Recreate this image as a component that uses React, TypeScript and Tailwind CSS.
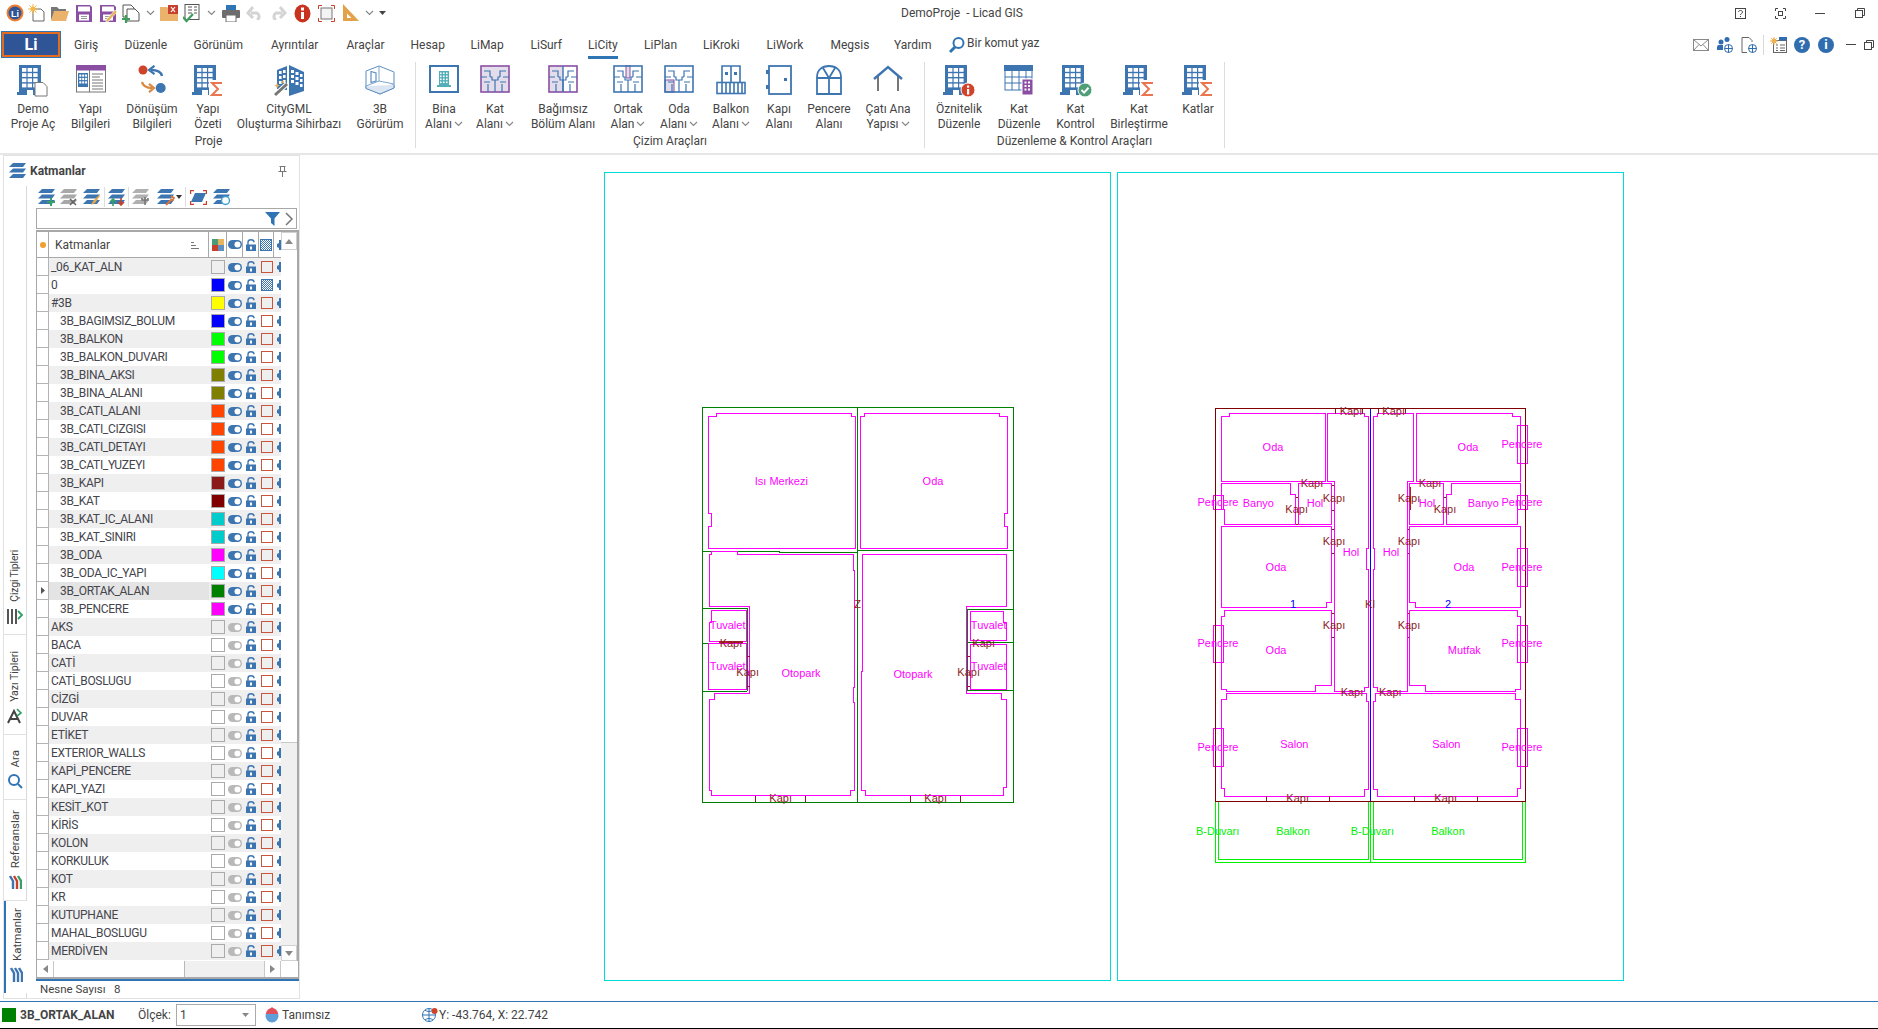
import React from 'react';

const BLUE = '#3d75b1';
const PURPLE = '#8a4fa3';
const LILAC = '#e3dcea';
const ORANGE = '#e9764f';

const Building: React.FC<{ overlay?: 'doc' | 'sigma' | 'info' | 'check' }> = ({ overlay }) => (
  <svg width="32" height="32" viewBox="0 0 32 32">
    <rect x="2" y="0" width="22" height="30" fill={BLUE} />
    <rect x="0" y="27" width="18" height="3" fill={BLUE} />
    {[0, 1, 2, 3].map((r) =>
      [0, 1, 2].map((c) => <rect key={`${r}${c}`} x={5 + c * 5.6} y={3 + r * 5.2} width="4.4" height="3.8" fill="#fff" />),
    )}
    <rect x="10" y="25" width="6" height="5" fill="#fff" />
    {overlay === 'doc' && <path d="M18 17.5h8l4 4v9.5H18z" fill="#fff" stroke="#777" strokeWidth="1" />}
    {overlay === 'sigma' && (
      <>
        <rect x="17" y="15" width="15" height="17" fill="#fff" />
        <path d="M30 18H20l6 6-6 6h10" fill="none" stroke={ORANGE} strokeWidth="2" />
      </>
    )}
    {overlay === 'info' && (
      <>
        <circle cx="25" cy="25" r="7" fill="#d0432b" stroke="#fff" />
        <rect x="24" y="24" width="2.2" height="5.5" fill="#fff" />
        <rect x="24" y="20.5" width="2.2" height="2.2" fill="#fff" />
      </>
    )}
    {overlay === 'check' && (
      <>
        <circle cx="25" cy="25" r="7" fill="#4f9e78" stroke="#fff" />
        <path d="M21.5 25l2.6 2.6 4.4-4.8" fill="none" stroke="#fff" strokeWidth="2" />
      </>
    )}
  </svg>
);

const YapiBilgi = () => (
  <svg width="30" height="28" viewBox="0 0 30 28">
    <rect x=".5" y="1" width="29" height="26" fill="#fff" stroke="#777" />
    <rect x="0" y="0" width="30" height="5.5" fill={PURPLE} />
    <path d="M13.5 5v22" stroke="#777" />
    <rect x="2" y="8" width="10" height="14" fill={BLUE} />
    {[0, 1, 2].map((r) => [0, 1, 2].map((c) => <rect key={`${r}${c}`} x={3.3 + c * 2.9} y={9.5 + r * 3.4} width="2" height="2.2" fill="#fff" />))}
    <path d="M16 9h11M16 12h8M16 15h11M16 18h11M16 21h11M16 24h11" stroke="#777" strokeWidth="1" />
  </svg>
);

const Donusum = () => (
  <svg width="28" height="28" viewBox="0 0 28 28">
    <circle cx="5" cy="5" r="4.5" fill="#d0432b" />
    <circle cx="22.7" cy="23" r="5" fill={BLUE} />
    <path d="M24 11C23 6 19 5 13 5" fill="none" stroke={BLUE} strokeWidth="2.4" />
    <path d="M16.5 0.8L11 5l5.5 4.2" fill="none" stroke={BLUE} strokeWidth="2.2" />
    <path d="M4 17c1 4 4 6 10 6" fill="none" stroke="#d98b44" strokeWidth="2.4" />
    <path d="M11 18.8L16 23l-5 4.2" fill="none" stroke="#d98b44" strokeWidth="2.2" />
  </svg>
);

const CityGml = () => (
  <svg width="32" height="32" viewBox="0 0 32 32">
    <path d="M4 5l10-4v24l-10-1z" fill={BLUE} />
    <path d="M16 0l15 7v19l-15 5z" fill={BLUE} />
    {[0, 1, 2].map((r) => (
      <g key={r} fill="#fff">
        <rect x="6" y={6 + r * 5} width="2.6" height="3" />
        <rect x="10" y={5 + r * 5} width="2.6" height="3" />
        <rect x="18" y={5 + r * 5} width="3" height="3" />
        <rect x="22.5" y={7 + r * 5} width="3" height="3" />
        <rect x="27" y={9 + r * 5} width="2.5" height="3" />
      </g>
    ))}
    <path d="M2 30L14 19" stroke="#fff" strokeWidth="5" />
    <path d="M2 30L14 19" stroke="#777" strokeWidth="3" />
    <path d="M4 18l1 2 2 .6-2 .8-1 2-.8-2-2-.8 2-.6zM10 15l.7 1.5 1.5.5-1.5.6-.7 1.4-.6-1.4-1.4-.6 1.4-.5z" fill="#e6b45a" />
  </svg>
);

const Gorurum = () => (
  <svg width="30" height="30" viewBox="0 0 30 30" fill="none" stroke="#5f90c3" strokeWidth="1">
    <path d="M1 6L14 1l15 6v16l-14 6L1 23z" />
    <path d="M1 6v15l14 4 14-6V7" stroke="#a8c2de" />
    <path d="M14 1v15M1 21l13-5 15 3" stroke="#7ea6d0" />
    <path d="M6 6.5v11l5-1.5V8z" strokeWidth="1.2" />
    <path d="M1 23l14 4.5L29 22" strokeWidth="1.4" />
    <path d="M1 21v2.5l14 5.5 14-6v-3" fill="#dbe6f2" />
  </svg>
);

const BinaAlan = () => (
  <svg width="30" height="28" viewBox="0 0 30 28">
    <rect x="1" y="1" width="28" height="26" fill="#fff" stroke={BLUE} strokeWidth="2" />
    <rect x="10" y="6" width="10" height="15" fill="#52afb9" />
    <rect x="8" y="20" width="14" height="2" fill="#52afb9" />
    {[0, 1, 2, 3].map((r) => [0, 1, 2].map((c) => <rect key={`${r}${c}`} x={11 + c * 3} y={7.5 + r * 3} width="1.6" height="1.6" fill="#fff" />))}
  </svg>
);

const Plan: React.FC<{ mode: 'kat' | 'bag' | 'ortak' | 'oda' }> = ({ mode }) => {
  const frame = mode === 'kat' || mode === 'bag' ? PURPLE : BLUE;
  return (
    <svg width="30" height="28" viewBox="0 0 30 28">
      {mode === 'kat' && <rect x="1" y="1" width="28" height="26" fill={LILAC} />}
      {mode === 'bag' && <rect x="1" y="1" width="14" height="26" fill={LILAC} />}
      {mode === 'ortak' && <path d="M13 0h4v13h-4z" fill={LILAC} stroke={PURPLE} />}
      {mode === 'oda' && <rect x="1" y="15" width="9" height="12" fill={LILAC} stroke={PURPLE} />}
      <rect x="1" y="1" width="28" height="26" fill="none" stroke={frame} strokeWidth="1.6" />
      <path
        d="M1 12h6M10 12V6H4M20 12V6h6M23 12h6M10 12h2v3h6v-3h2M15 15v12M8 27v-8M22 27v-8M4 17h6M20 17h6"
        fill="none"
        stroke={BLUE}
        strokeWidth="1.2"
      />
      {mode === 'bag' && <path d="M15 1v26" stroke={BLUE} strokeWidth="1.4" />}
    </svg>
  );
};

const Balkon = () => (
  <svg width="30" height="30" viewBox="0 0 30 30" fill="none" stroke={BLUE} strokeWidth="1.6">
    <path d="M6 18V1h18v17M15 1v17" />
    <rect x="9" y="7" width="3" height="3" fill={BLUE} stroke="none" />
    <rect x="18" y="7" width="3" height="3" fill={BLUE} stroke="none" />
    <rect x="1" y="17.5" width="28" height="11" />
    <path d="M6 18v10M10 18v10M14 18v10M18 18v10M22 18v10M26 18v10" />
  </svg>
);

const Kapi = () => (
  <svg width="26" height="30" viewBox="0 0 26 30">
    <rect x="3" y="1" width="22" height="28" fill="#fff" stroke={BLUE} strokeWidth="1.8" />
    <rect x="18" y="13" width="3" height="3" fill={BLUE} />
    <rect x="0" y="5" width="3" height="4" fill={BLUE} />
    <rect x="0" y="20" width="3" height="4" fill={BLUE} />
  </svg>
);

const Pencere = () => (
  <svg width="26" height="30" viewBox="0 0 26 30" fill="none" stroke={BLUE} strokeWidth="1.8">
    <path d="M1 29V12C1 5 6 1 13 1s12 4 12 11v17z" />
    <path d="M1 13h24M13 13v16M13 13L7 3M13 13l6-10" />
  </svg>
);

const Cati = () => (
  <svg width="30" height="28" viewBox="0 0 30 28">
    <path d="M5 11v15M25 11v15" stroke="#777" strokeWidth="2" />
    <path d="M1 14L15 2l14 12" fill="none" stroke={BLUE} strokeWidth="2.4" />
  </svg>
);

const KatDuzenle = () => (
  <svg width="30" height="30" viewBox="0 0 30 30">
    <rect x="1" y="1" width="27" height="24" fill="#fff" stroke={BLUE} strokeWidth="1" />
    <rect x="0" y="0" width="29" height="6" fill={BLUE} />
    <path d="M1 12h27M1 18h27M8 6v19M15 6v19M22 6v19" stroke={BLUE} />
    <rect x="18" y="14" width="11" height="16" fill={PURPLE} stroke="#fff" />
    {[0, 1, 2].map((r) => [0, 1].map((c) => <rect key={`${r}${c}`} x={20.5 + c * 3.5} y={16.5 + r * 3.5} width="2" height="2" fill="#fff" />))}
  </svg>
);

const RIBBON: { title: string; items: { w: number; lines: string[]; caret?: boolean; icon: React.ReactNode }[] }[] = [
  {
    title: 'Proje',
    items: [
      { w: 58, lines: ['Demo', 'Proje Aç'], icon: <Building overlay="doc" /> },
      { w: 57, lines: ['Yapı', 'Bilgileri'], icon: <YapiBilgi /> },
      { w: 66, lines: ['Dönüşüm', 'Bilgileri'], icon: <Donusum /> },
      { w: 46, lines: ['Yapı', 'Özeti'], icon: <Building overlay="sigma" /> },
      { w: 116, lines: ['CityGML', 'Oluşturma Sihirbazı'], icon: <CityGml /> },
      { w: 66, lines: ['3B', 'Görürüm'], icon: <Gorurum /> },
    ],
  },
  {
    title: 'Çizim Araçları',
    items: [
      { w: 52, lines: ['Bina', 'Alanı'], caret: true, icon: <BinaAlan /> },
      { w: 50, lines: ['Kat', 'Alanı'], caret: true, icon: <Plan mode="kat" /> },
      { w: 86, lines: ['Bağımsız', 'Bölüm Alanı'], icon: <Plan mode="bag" /> },
      { w: 44, lines: ['Ortak', 'Alan'], caret: true, icon: <Plan mode="ortak" /> },
      { w: 58, lines: ['Oda', 'Alanı'], caret: true, icon: <Plan mode="oda" /> },
      { w: 46, lines: ['Balkon', 'Alanı'], caret: true, icon: <Balkon /> },
      { w: 50, lines: ['Kapı', 'Alanı'], icon: <Kapi /> },
      { w: 50, lines: ['Pencere', 'Alanı'], icon: <Pencere /> },
      { w: 68, lines: ['Çatı Ana', 'Yapısı'], caret: true, icon: <Cati /> },
    ],
  },
  {
    title: 'Düzenleme & Kontrol Araçları',
    items: [
      { w: 64, lines: ['Öznitelik', 'Düzenle'], icon: <Building overlay="info" /> },
      { w: 56, lines: ['Kat', 'Düzenle'], icon: <KatDuzenle /> },
      { w: 57, lines: ['Kat', 'Kontrol'], icon: <Building overlay="check" /> },
      { w: 70, lines: ['Kat', 'Birleştirme'], icon: <Building overlay="sigma" /> },
      { w: 48, lines: ['Katlar'], icon: <Building overlay="sigma" /> },
    ],
  },
];

const TABS: [string, number][] = [
  ['Giriş', 50.5],
  ['Düzenle', 69],
  ['Görünüm', 77.5],
  ['Ayrıntılar', 75.5],
  ['Araçlar', 64],
  ['Hesap', 60],
  ['LiMap', 60],
  ['LiSurf', 57.5],
  ['LiCity', 56],
  ['LiPlan', 59],
  ['LiKroki', 63.5],
  ['LiWork', 64],
  ['Megsis', 63.5],
  ['Yardım', 54],
];

const Chevron = () => (
  <svg width="9" height="6" viewBox="0 0 9 6" fill="none" stroke="#888" strokeWidth="1.2">
    <path d="M1 1l3.5 3.5L8 1" />
  </svg>
);

const Floppy: React.FC<{ pen?: boolean }> = ({ pen }) => (
  <svg width="17" height="17" viewBox="0 0 17 17">
    <path d="M0 0h14l2 2v15H0z" fill={PURPLE} />
    <rect x="2" y="1.500" width="12" height="5" fill="#fff" />
    <rect x="3" y="9.500" width="10" height="6" fill="#fff" />
    <path d="M5 11.500h6M5 13.500h6" stroke="#999" />
    {pen && <path d="M6 15l9-10 2 2-9 10H6z" fill="#e6b45a" stroke="#fff" strokeWidth=".6" />}
  </svg>
);

const QA: [number, React.ReactNode][] = [
  [
    22,
    <svg width="18" height="18" viewBox="0 0 18 18">
      <circle cx="9" cy="9" r="8.5" fill="#ed7d31" />
      <circle cx="9" cy="9" r="6.5" fill="#2f5597" />
      <text x="9" y="12.5" textAnchor="middle" fontSize="9" fontWeight="700" fill="#fff" fontFamily="Liberation Sans">
        Li
      </text>
    </svg>,
  ],
  [
    22,
    <svg width="18" height="18" viewBox="0 0 18 18">
      <path d="M5 5h8l3 3v9H5z" fill="#fff" stroke="#666" />
      <circle cx="5" cy="5" r="2.5" fill="#f2b84b" />
      <path d="M5 0v10M0 5h10M1.5 1.5l7 7M8.5 1.5l-7 7" stroke="#f2b84b" />
    </svg>,
  ],
  [
    24,
    <svg width="18" height="16" viewBox="0 0 18 16">
      <path d="M0 2h6l2 2h7v3H4L0 15z" fill="#777" />
      <path d="M3 6h15l-3 10H0z" fill="#eab26b" />
    </svg>,
  ],
  [24, <Floppy />],
  [24, <Floppy pen />],
  [
    22,
    <svg width="18" height="19" viewBox="0 0 18 19">
      <path d="M1 1h8l3 3v9H1z" fill="#fff" stroke="#555" />
      <path d="M5 5h8l4 4v8H5z" fill="#fff" stroke="#555" />
      <path d="M0 15h8M4 11v8" stroke="#3f9e5e" strokeWidth="2.2" />
    </svg>,
  ],
  [16, <Chevron />],
  [
    22,
    <svg width="18" height="16" viewBox="0 0 18 16">
      <path d="M0 2h7l2 2h9v12H0z" fill="#eab26b" />
      <rect x="8" y="0" width="10" height="9" fill="#c8402b" />
      <path d="M11 2l4 5M15 2l-4 5" stroke="#fff" strokeWidth="1.2" />
    </svg>,
  ],
  [
    23,
    <svg width="18" height="19" viewBox="0 0 18 19">
      <rect x="2" y="0.5" width="14" height="15" fill="#fff" stroke="#555" />
      <path d="M5 3h4M11 3h3M5 6h4M11 6h3M5 9h4M11 9h3" stroke="#555" />
      <path d="M0 13l3.5 4L10 10" fill="none" stroke="#3f9e5e" strokeWidth="2.2" />
    </svg>,
  ],
  [16, <Chevron />],
  [
    23,
    <svg width="18" height="17" viewBox="0 0 18 17">
      <rect x="4" y="0" width="10" height="6" fill="#2f75b5" />
      <rect x="0" y="5" width="18" height="8" rx="1" fill="#6d6d6d" />
      <rect x="4" y="10" width="10" height="7" fill="#fff" stroke="#6d6d6d" />
    </svg>,
  ],
  [
    24,
    <svg width="17" height="14" viewBox="0 0 17 14" fill="none" stroke="#d4d4d4" strokeWidth="3">
      <path d="M5 7h6a4 4 0 0 1 0 7M7 1L2 7l5 5" />
    </svg>,
  ],
  [
    24,
    <svg width="17" height="14" viewBox="0 0 17 14" fill="none" stroke="#d4d4d4" strokeWidth="3">
      <path d="M12 7H6a4 4 0 0 0 0 7M10 1l5 6-5 5" />
    </svg>,
  ],
  [
    24,
    <svg width="17" height="19" viewBox="0 0 17 19">
      <ellipse cx="8.5" cy="9.5" rx="8" ry="9" fill="#c8321e" />
      <rect x="7" y="8" width="3" height="7" fill="#fff" />
      <rect x="7" y="3.5" width="3" height="3" fill="#fff" />
    </svg>,
  ],
  [
    24,
    <svg width="17" height="17" viewBox="0 0 17 17" fill="none">
      <path d="M0.5 4V0.5H4M13 .5h3.5V4M16.5 13v3.5H13M4 16.5H.5V13" stroke="#c8402b" />
      <rect x="3" y="3" width="11" height="11" fill="#f3f3f3" stroke="#777" />
    </svg>,
  ],
  [
    24,
    <svg width="17" height="18" viewBox="0 0 17 18">
      <path d="M1 0l16 17H1z" fill="#e2a24b" />
      <path d="M5 9.5L9.5 14H5z" fill="#fff" />
    </svg>,
  ],
  [14, <Chevron />],
  [
    12,
    <svg width="7" height="4" viewBox="0 0 7 4">
      <path d="M0 0h7L3.5 4z" fill="#444" />
    </svg>,
  ],
];

const Stack: React.FC<{ color?: string; children?: React.ReactNode }> = ({ color = BLUE, children }) => (
  <svg width="18" height="17" viewBox="0 0 18 17">
    <path d="M4 0h13l-3 4H0zM4 5.5h13l-3 4H0zM4 11h13l-3 4H0z" fill={color} />
    {children}
  </svg>
);

const TOOLS: { w: number; sep?: boolean; icon: React.ReactNode }[] = [
  {
    w: 22,
    icon: (
      <Stack>
        <path d="M13 9v8M9 13h8" stroke="#3a9e6a" strokeWidth="2" />
      </Stack>
    ),
  },
  {
    w: 22,
    icon: (
      <Stack color="#a8a8a8">
        <path d="M10 10l6 6M16 10l-6 6" stroke="#666" strokeWidth="1.6" />
      </Stack>
    ),
  },
  {
    w: 25,
    sep: true,
    icon: (
      <Stack>
        <path d="M10 12l6-6 1 1-5 7z M10 12l-2 4 4-2z" fill="#e6a74e" />
      </Stack>
    ),
  },
  {
    w: 24,
    sep: true,
    icon: (
      <Stack>
        <path d="M5 17V11M2 13l3-3 3 3" stroke="#3a9e6a" strokeWidth="1.6" fill="none" />
        <path d="M13 9v6M10 13l3 3 3-3" stroke="#c8402b" strokeWidth="1.6" fill="none" />
      </Stack>
    ),
  },
  {
    w: 24,
    icon: (
      <Stack color="#b0b0b0">
        <path d="M13 8v8M10 9v2h6V9" stroke="#777" strokeWidth="1.6" fill="none" />
      </Stack>
    ),
  },
  {
    w: 33,
    sep: true,
    icon: (
      <span className="flex items-center gap-[1px]">
        <Stack>
          <path d="M9 16l6-6M14 7l3 2-2 3" stroke="#d9743a" strokeWidth="1.8" fill="none" />
        </Stack>
        <svg width="6" height="4" viewBox="0 0 6 4">
          <path d="M0 0h6L3 4z" fill="#333" />
        </svg>
      </span>
    ),
  },
  {
    w: 24,
    icon: (
      <svg width="17" height="15" viewBox="0 0 17 15" fill="none">
        <path d="M5 3h11l-4 9H1z" fill={BLUE} />
        <path d="M.5 4V.5H4M13 .5h3.5V4M16.5 11v3.5H13M4 14.5H.5V11" stroke="#c8402b" strokeWidth="1.4" />
      </svg>
    ),
  },
  {
    w: 23,
    icon: (
      <Stack>
        <circle cx="12.5" cy="11.5" r="4" fill="#fff" stroke="#3d9fd0" strokeWidth="1.4" />
      </Stack>
    ),
  },
];

type Layer = { name: string; color?: string; child?: boolean; on?: boolean; pattern?: boolean; active?: boolean };

const LAYERS: Layer[] = [
  { name: '_06_KAT_ALN', on: true },
  { name: '0', color: '#0000ff', on: true, pattern: true },
  { name: '#3B', color: '#ffff00', on: true },
  { name: '3B_BAGIMSIZ_BOLUM', color: '#0000ff', child: true, on: true },
  { name: '3B_BALKON', color: '#00ff00', child: true, on: true },
  { name: '3B_BALKON_DUVARI', color: '#00ff00', child: true, on: true },
  { name: '3B_BINA_AKSI', color: '#808000', child: true, on: true },
  { name: '3B_BINA_ALANI', color: '#808000', child: true, on: true },
  { name: '3B_CATI_ALANI', color: '#ff4500', child: true, on: true },
  { name: '3B_CATI_CIZGISI', color: '#ff4500', child: true, on: true },
  { name: '3B_CATI_DETAYI', color: '#ff4500', child: true, on: true },
  { name: '3B_CATI_YUZEYI', color: '#ff4500', child: true, on: true },
  { name: '3B_KAPI', color: '#8b1a1a', child: true, on: true },
  { name: '3B_KAT', color: '#800000', child: true, on: true },
  { name: '3B_KAT_IC_ALANI', color: '#00cccc', child: true, on: true },
  { name: '3B_KAT_SINIRI', color: '#00cccc', child: true, on: true },
  { name: '3B_ODA', color: '#ff00ff', child: true, on: true },
  { name: '3B_ODA_IC_YAPI', color: '#00ffff', child: true, on: true },
  { name: '3B_ORTAK_ALAN', color: '#008000', child: true, on: true, active: true },
  { name: '3B_PENCERE', color: '#ff00ff', child: true, on: true },
  ...[
    'AKS',
    'BACA',
    'CATİ',
    'CATİ_BOSLUGU',
    'CİZGİ',
    'DUVAR',
    'ETİKET',
    'EXTERIOR_WALLS',
    'KAPİ_PENCERE',
    'KAPI_YAZI',
    'KESİT_KOT',
    'KİRİS',
    'KOLON',
    'KORKULUK',
    'KOT',
    'KR',
    'KUTUPHANE',
    'MAHAL_BOSLUGU',
    'MERDİVEN',
  ].map((name) => ({ name })),
];

const Toggle: React.FC<{ on?: boolean }> = ({ on }) => (
  <svg width="14" height="9" viewBox="0 0 14 9">
    <rect width="14" height="9" rx="4.5" fill={on ? BLUE : '#b9b9b9'} />
    <circle cx="9.5" cy="4.5" r="3" fill="#fff" />
  </svg>
);

const Lock = () => (
  <svg width="10" height="12" viewBox="0 0 10 12">
    <path d="M2 6V3.2C2 1.6 3.2.8 5 .8s3 .8 3 2.4" fill="none" stroke={BLUE} strokeWidth="1.4" />
    <rect x="0" y="5.5" width="10" height="6.5" fill={BLUE} />
    <rect x="4" y="7.5" width="2" height="3" fill="#fff" />
  </svg>
);

const Pattern: React.FC<{ fill?: boolean }> = ({ fill }) =>
  fill ? (
    <span className="h-[12px] w-[12px] border border-[#3d75b1] bg-[repeating-conic-gradient(#3d75b1_0_25%,#fff_0_50%)] bg-[length:2px_2px]" />
  ) : (
    <span className="h-[12px] w-[12px] border border-[#c8553c]" />
  );

const Plug = () => (
  <svg width="8" height="12" viewBox="0 0 8 12" className="shrink-0">
    <path d="M3 1h2v3h2v2H5v1h2v2H5v2H3V9L1 8V5l2-1z" fill={BLUE} />
  </svg>
);

const LayerRow: React.FC<{ layer: Layer; index: number }> = ({ layer, index }) => {
  const bg = index % 2 === 0 ? 'bg-[#efefef]' : 'bg-white';
  return (
    <div className={`flex h-[18px] items-center ${bg}`}>
      <div className="flex h-full w-[12px] shrink-0 items-center justify-center border-r border-b border-[#b4b4b4] bg-white">
        {layer.active && (
          <svg width="4" height="7" viewBox="0 0 4 7">
            <path d="M0 0l4 3.5L0 7z" fill="#555" />
          </svg>
        )}
      </div>
      <div
        className={`flex h-full w-[160px] shrink-0 items-center text-[12px] tracking-[-0.3px] text-[#45454d] ${layer.child ? 'pl-[11px]' : 'pl-[2px]'} ${layer.active ? 'bg-[#e4e4e4]' : ''}`}
      >
        {layer.name}
      </div>
      <div className="flex w-[18px] shrink-0 items-center justify-center">
        <span
          className="h-[14px] w-[14px] border border-[#aaaaaa]"
          style={layer.color ? { backgroundColor: layer.color } : undefined}
        />
      </div>
      <div className="flex w-[16px] shrink-0 items-center justify-center">
        <Toggle on={layer.on} />
      </div>
      <div className="flex w-[16px] shrink-0 items-center justify-center">
        <Lock />
      </div>
      <div className="flex w-[15px] shrink-0 items-center justify-center">
        <Pattern fill={layer.pattern} />
      </div>
      <div className="flex w-[7px] shrink-0 items-center overflow-hidden pl-[2px]">
        <Plug />
      </div>
    </div>
  );
};

const SIDE_TABS: { label: string; h: number; active?: boolean; text: string; icon: React.ReactNode }[] = [
  {
    label: 'Çizgi Tipleri',
    h: 95,
    text: 'text-[10.500px] tracking-[-0.2px]',
    icon: (
      <svg width="16" height="16" viewBox="0 0 16 16" fill="none">
        <path d="M1 1v15M5 1v15M9 1v15" stroke="#444" strokeWidth="1.8" />
        <path d="M11 3l4 4-4 4" stroke="#2f9e63" strokeWidth="1.8" />
      </svg>
    ),
  },
  {
    label: 'Yazı Tipleri',
    h: 100,
    text: 'text-[10.500px]',
    icon: (
      <svg width="16" height="16" viewBox="0 0 16 16" fill="none">
        <path d="M1 15L7 3l6 12M3.500 11h7" stroke="#444" strokeWidth="2" />
        <path d="M10 1l4 4-4 3" stroke="#2f9e63" strokeWidth="1.6" />
      </svg>
    ),
  },
  {
    label: 'Ara',
    h: 65,
    text: 'text-[11.500px]',
    icon: (
      <svg width="16" height="16" viewBox="0 0 16 16" fill="none" stroke="#2f75b5" strokeWidth="2">
        <circle cx="7" cy="7" r="5" />
        <path d="M11 11l4 4" />
      </svg>
    ),
  },
  {
    label: 'Referanslar',
    h: 101,
    text: 'text-[11.500px]',
    icon: (
      <svg width="13" height="16" viewBox="0 0 13 16" fill="none" strokeWidth="2.4">
        <path d="M1 2l3 5v8" stroke="#3d75b1" />
        <path d="M5 2l3 5v8" stroke="#c8402b" />
        <path d="M9 2l3 5v8" stroke="#3a9e6a" />
      </svg>
    ),
  },
  {
    label: 'Katmanlar',
    h: 92,
    active: true,
    text: 'text-[11.500px]',
    icon: (
      <svg width="13" height="16" viewBox="0 0 13 16" fill="none" stroke={BLUE} strokeWidth="2.4">
        <path d="M1 1l3 5v9M5 1l3 5v9M9 1l3 5v9" />
      </svg>
    ),
  },
];

// floor plan coordinates are 3x page pixels, offset from the plan origin
const GROUND_ROOMS = [
  '55,65 80,65 80,56 485,56 485,65 497,65 497,460 55,460 55,394 65,394 65,355 55,355',
  '511,65 523,65 523,56 928,56 928,65 953,65 953,355 943,355 943,394 953,394 953,460 511,460',
  '58,478 65,478 65,470 142,470 142,478 491,478 491,526 494,526 494,877 490,877 490,922 494,922 494,1187 482,1187 482,1201 64,1201 64,1187 58,1187 58,913 73,913 73,895 179,895 179,634 58,634',
  '517,478 950,478 950,634 829,634 829,895 935,895 935,913 950,913 950,1178 941,1178 941,1201 526,1201 526,1187 514,1187 514,831 517,831',
  '64,646 170,646 170,739 58,739 58,682 64,682',
  '55,745 170,745 170,884 55,884',
  '841,649 941,649 941,682 950,682 950,736 841,736',
  '841,748 950,748 950,884 841,884',
];

const FLOOR_ROOMS = [
  '94,65 119,65 119,56 407,56 407,259 94,259',
  '679,56 967,56 967,65 992,65 992,259 679,259',
  '413,56 524,56 524,65 536,65 536,461 529,461 529,523 536,523 536,879 525,879 525,889 433,889 433,259 413,259',
  '551,65 563,65 563,56 670,56 670,259 653,259 653,889 563,889 563,879 551,879 551,523 555,523 555,461 551,461',
  '94,265 302,265 302,298 317,298 317,388 103,388 103,344 94,344',
  '325,265 425,265 425,388 325,388',
  '784,265 992,265 992,344 982,344 982,388 769,388 769,298 784,298',
  '658,265 761,265 761,388 658,388',
  '94,394 425,394 425,623 409,623 409,637 94,637',
  '658,394 992,394 992,637 676,637 676,623 658,623',
  '103,646 425,646 425,871 377,871 377,889 109,889 109,884 94,884 94,664 103,664',
  '658,646 982,646 982,664 992,664 992,884 976,884 976,889 707,889 707,871 658,871',
  '109,895 530,895 530,919 536,919 536,1185 524,1185 524,1204 103,1204 103,1180 94,1180 94,914 109,914',
  '551,919 557,919 557,895 976,895 976,914 992,914 992,1180 982,1180 982,1204 563,1204 563,1185 551,1185',
  '70,301 101,301 101,344 70,344',
  '70,691 101,691 101,803 70,803',
  '70,1000 101,1000 101,1115 70,1115',
  '982,91 1013,91 1013,206 982,206',
  '982,301 1013,301 1013,344 982,344',
  '982,460 1013,460 1013,575 982,575',
  '982,691 1013,691 1013,803 982,803',
  '982,1000 1013,1000 1013,1115 982,1115',
];

const M = '#ff00ff';
const R = '#8a1c1c';
const G = '#00f000';

const GROUND_TEXT: [string, number, number, string][] = [
  ['Isı Merkezi', 274, 258, M],
  ['Oda', 729, 258, M],
  ['Z', 503, 628, R],
  ['Tuvalet', 113, 691, M],
  ['Tuvalet', 896, 691, M],
  ['Kapı', 123, 743, R],
  ['Kapı', 881, 743, R],
  ['Tuvalet', 113, 814, M],
  ['Tuvalet', 896, 814, M],
  ['Kapı', 173, 830, R],
  ['Kapı', 836, 830, R],
  ['Otopark', 333, 835, M],
  ['Otopark', 669, 838, M],
  ['Kapı', 272, 1210, R],
  ['Kapı', 737, 1210, R],
];

const FLOOR_TEXT: [string, number, number, string][] = [
  ['Kapı', 483, 47, R],
  ['Kapı', 611, 47, R],
  ['Oda', 249, 157, M],
  ['Oda', 834, 157, M],
  ['Pencere', 996, 148, M],
  ['Pencere', 84, 322, M],
  ['Banyo', 205, 325, M],
  ['Hol', 375, 325, M],
  ['Kapı', 320, 343, R],
  ['Kapı', 366, 263, R],
  ['Kapı', 432, 310, R],
  ['Kapı', 657, 310, R],
  ['Hol', 711, 325, M],
  ['Kapı', 765, 343, R],
  ['Kapı', 720, 263, R],
  ['Banyo', 880, 325, M],
  ['Pencere', 996, 322, M],
  ['Kapı', 432, 438, R],
  ['Kapı', 657, 438, R],
  ['Hol', 483, 472, M],
  ['Hol', 603, 472, M],
  ['Oda', 258, 516, M],
  ['Oda', 822, 516, M],
  ['Pencere', 996, 517, M],
  ['1', 309, 627, '#0000ff'],
  ['2', 774, 627, '#0000ff'],
  ['Kl', 540, 627, R],
  ['Kapı', 432, 690, R],
  ['Kapı', 657, 690, R],
  ['Pencere', 84, 745, M],
  ['Pencere', 996, 745, M],
  ['Oda', 258, 766, M],
  ['Mutfak', 823, 766, M],
  ['Kapı', 486, 890, R],
  ['Kapı', 601, 890, R],
  ['Salon', 313, 1048, M],
  ['Salon', 769, 1048, M],
  ['Pencere', 84, 1057, M],
  ['Pencere', 996, 1057, M],
  ['Kapı', 323, 1210, R],
  ['Kapı', 767, 1210, R],
  ['B-Duvarı', 83, 1309, G],
  ['Balkon', 309, 1309, G],
  ['B-Duvarı', 547, 1309, G],
  ['Balkon', 774, 1309, G],
];

const Line: React.FC<{ d: string; color: string; w?: number }> = ({ d, color, w = 1 }) => (
  <path d={d} fill="none" stroke={color} strokeWidth={w} vectorEffect="non-scaling-stroke" />
);

const Labels: React.FC<{ items: [string, number, number, string][] }> = ({ items }) => (
  <g fontFamily="Liberation Sans" fontSize="33" textAnchor="middle" dominantBaseline="middle" shapeRendering="auto">
    {items.map(([t, x, y, c], i) => (
      <text key={i} x={x} y={y + 3} fill={c}>
        {t}
      </text>
    ))}
  </g>
);

const Drawing = () => (
  <svg width="1578" height="846" viewBox="300 155 1578 846" shapeRendering="crispEdges" className="block">
    <rect x="604.5" y="172.5" width="506" height="808" fill="none" stroke="#00dcdc" strokeWidth="1.5" />
    <rect x="1117.5" y="172.5" width="506" height="808" fill="none" stroke="#00dcdc" strokeWidth="1.5" />

    <g transform="translate(690 395) scale(0.33333)">
      <Line
        color="#008000"
        d="M37 38H970V1222H37ZM502 38V1222M37 469H270V472H502M502 466H970M37 640H172M37 745H172M37 889H172M172 640V889M832 643H970M832 742H970M832 886H970M832 643V886"
      />
      {GROUND_ROOMS.map((p, i) => (
        <polygon key={i} points={p} fill="none" stroke={M} strokeWidth="1" vectorEffect="non-scaling-stroke" />
      ))}
      <Line color="#8a1c1c" d="M196 1202V1222M346 1202V1222M661 1202V1222M811 1202V1222M172 784H179M172 874H179M832 784H840M832 874H840" />
      <Line color="#a82424" w={2} d="M88 742H158" />
      <Labels items={GROUND_TEXT} />
    </g>

    <g transform="translate(1190 395) scale(0.33333)">
      <Line color="#00f000" d="M76 1219V1402H1006V1219M541 1219V1402M85 1219V1393H536V1219M550 1219V1393H997V1219" />
      {FLOOR_ROOMS.map((p, i) => (
        <polygon key={i} points={p} fill="none" stroke={M} strokeWidth="1" vectorEffect="non-scaling-stroke" />
      ))}
      <Line color="#800000" d="M76 41H1006V1219H76Z" />
      <Line
        color="#8a1c1c"
        d="M229 1204V1219M418 1204V1219M673 1204V1219M862 1204V1219M437 41V56M518 41V56M567 41V56M647 41V56M425 271H433M425 346H433M425 403H433M425 475H433M425 655H433M425 727H433M653 403H658M653 475H658M653 655H658M653 727H658M317 307H325M317 388H325M761 307H769"
      />
      <Line color="#a82424" d="M661 275V346" />
      <Line color="#0000ff" d="M541 41V1219" />
      <Labels items={FLOOR_TEXT} />
    </g>
  </svg>
);

export default function App() {
  return (
    <div className="flex h-[1029px] w-[1878px] flex-col overflow-hidden bg-white font-['Roboto',sans-serif] text-[12px] text-[#444444]">
      {/* title bar */}
      <div className="flex h-[31px] shrink-0 items-center pb-[5px] pl-[4px]">
        {QA.map(([w, icon], i) => (
          <span key={i} className="flex shrink-0 items-center justify-center" style={{ width: w }}>
            {icon}
          </span>
        ))}
        <span className="ml-[513px] whitespace-nowrap text-[12px]">DemoProje&nbsp; - Licad GIS</span>
        <div className="ml-auto mr-[-2px] flex items-center">
          <span className="flex w-[40px] justify-center">
            <svg width="11" height="11" viewBox="0 0 11 11" fill="none" stroke="#444">
              <rect x=".5" y=".5" width="10" height="10" />
              <path d="M3.500 4c0-2 4-2 4 0 0 1.500-2 1.500-2 3M5.500 8v1" />
            </svg>
          </span>
          <span className="flex w-[40px] justify-center">
            <svg width="11" height="11" viewBox="0 0 11 11" fill="none" stroke="#444">
              <path d="M.5 3V.5H3M8 .5h2.500V3M10.500 8v2.500H8M3 10.500H.5V8" />
              <rect x="3.500" y="3.500" width="4" height="4" />
            </svg>
          </span>
          <span className="flex w-[40px] justify-center">
            <span className="h-px w-[10px] bg-[#444]" />
          </span>
          <span className="flex w-[40px] justify-center">
            <svg width="10" height="10" viewBox="0 0 10 10" fill="none" stroke="#444">
              <rect x=".5" y="2.500" width="7" height="7" />
              <path d="M2.500 2.500v-2h7v7h-2" />
            </svg>
          </span>
        </div>
      </div>

      {/* tabs */}
      <div className="flex h-[27px] shrink-0 items-center pl-[1px]">
        <div className="mr-[13px] flex h-[27px] w-[60px] items-center justify-center border border-[#2f75b5]">
          <div className="flex h-full w-full items-center justify-center border-2 border-[#e36c1e] bg-[#2f5597] text-[16px] font-bold text-white">
            Li
          </div>
        </div>
        {TABS.map(([t, w]) => (
          <div key={t} className="flex h-full shrink-0 items-center" style={{ width: w }}>
            <span className={t === 'LiCity' ? 'border-b-[3px] border-[#2f75b5] pb-[2px] pt-[5px]' : ''}>{t}</span>
          </div>
        ))}
        <svg width="17" height="18" viewBox="0 0 17 18" fill="none" stroke="#2f75b5" strokeWidth="2" className="mr-[2px]">
          <circle cx="10.500" cy="7" r="5" />
          <path d="M7 11l-5 5" strokeWidth="3" />
        </svg>
        <span className="mb-[4px]">Bir komut yaz</span>
        <div className="ml-auto flex items-center">
          <span className="flex w-[24px] justify-center">
            <svg width="16" height="12" viewBox="0 0 16 12" fill="none" stroke="#888">
              <rect x=".5" y=".5" width="15" height="11" />
              <path d="M.5.5L8 7l7.500-6.500M.5 11.500L6 5.500M15.500 11.500L10 5.500" />
            </svg>
          </span>
          <span className="flex w-[24px] justify-center">
            <svg width="16" height="16" viewBox="0 0 16 16">
              <circle cx="10" cy="2.500" r="2.500" fill="#2f6db0" />
              <circle cx="4" cy="5" r="2.500" fill="#2f6db0" />
              <path d="M0 13V10q0-2 2-2h4v5z" fill="#2f6db0" />
              <circle cx="11.500" cy="11.500" r="4" fill="#fff" stroke="#2f6db0" />
              <path d="M7.500 11.500h8M11.500 7.500v8" stroke="#2f6db0" />
            </svg>
          </span>
          <span className="flex w-[24px] justify-center">
            <svg width="16" height="16" viewBox="0 0 16 16" fill="none" stroke="#666">
              <path d="M1 .5h7l3 3V5M6 15.500H1V.5" />
              <circle cx="11.500" cy="11.500" r="4" fill="#fff" stroke="#2f6db0" />
              <path d="M7.500 11.500h8M11.500 7.500v8" stroke="#2f6db0" />
            </svg>
          </span>
          <span className="mx-[2px] h-[20px] w-px bg-[#d8d8d8]" />
          <span className="flex w-[24px] justify-center">
            <svg width="17" height="16" viewBox="0 0 17 16">
              <rect x="3.500" y="3.500" width="13" height="12" fill="#fff" stroke="#666" />
              <rect x="9" y="0" width="8" height="3.500" fill="#2f6db0" />
              <path d="M6 8h2M10 8h5M6 11h2M10 11h5M6 13.500h2M10 13.500h5" stroke="#666" />
              <circle cx="4" cy="4" r="2.400" fill="#f0b050" />
              <path d="M4 0v8M0 4h8M1.200 1.200l5.600 5.600M6.800 1.200l-5.600 5.600" stroke="#f0b050" />
            </svg>
          </span>
          <span className="flex w-[24px] justify-center">
            <span className="flex h-[16px] w-[16px] items-center justify-center rounded-full bg-[#2f6db0] text-[13px] font-bold leading-none text-white">
              ?
            </span>
          </span>
          <span className="flex w-[24px] justify-center">
            <span className="flex h-[16px] w-[16px] items-center justify-center rounded-full bg-[#2f6db0] text-[13px] font-bold leading-none text-white">
              i
            </span>
          </span>
          <span className="flex w-[26px] justify-center">
            <span className="h-px w-[10px] bg-[#444]" />
          </span>
          <span className="w-[14px] self-center">
            <svg width="10" height="10" viewBox="0 0 10 10" fill="none" stroke="#444">
              <rect x=".5" y="2.500" width="7" height="7" />
              <path d="M2.500 2.500v-2h7v7h-2" />
            </svg>
          </span>
        </div>
      </div>

      {/* ribbon */}
      <div className="flex h-[97px] shrink-0 border-b-2 border-[#e6e6e6] pl-[4px]">
        {RIBBON.map((g) => (
          <React.Fragment key={g.title}>
            <div className="flex flex-col">
              <div className="flex h-[76px] pt-[7px]">
                {g.items.map((it) => (
                  <div key={it.lines.join()} className="flex flex-col items-center" style={{ width: it.w }}>
                    <div className="flex h-[36.500px] shrink-0 items-start justify-center">{it.icon}</div>
                    {it.lines.map((l, i) => (
                      <div key={l} className="flex h-[15px] items-center gap-[2px] whitespace-nowrap leading-[15px]">
                        {l}
                        {it.caret && i === 1 && <Chevron />}
                      </div>
                    ))}
                  </div>
                ))}
              </div>
              <div className="h-[15px] text-center leading-[15px]">{g.title}</div>
            </div>
            <div className="mx-[2px] mt-[4px] h-[86px] w-px shrink-0 bg-[#dcdcdc]" />
          </React.Fragment>
        ))}
      </div>

      {/* body */}
      <div className="flex min-h-0 flex-1">
        <div className="mb-[2px] ml-[3px] flex h-[844px] w-[297px] shrink-0 flex-col border border-[#e2e2e2]">
          <div className="flex h-[30px] shrink-0 items-center pl-[5px] pr-[12px]">
            <Stack />
            <span className="ml-[3px] text-[12px] font-bold text-[#444]">Katmanlar</span>
            <svg width="9" height="11" viewBox="0 0 9 11" className="ml-auto" fill="none" stroke="#777">
              <path d="M1.500.5h6M2.500 1v4M6.500 1v4M.5 5.500h8M4.500 6v5" />
            </svg>
          </div>
          <div className="flex min-h-0 flex-1">
            <div className="flex w-[23px] shrink-0 flex-col justify-end border-r border-[#d9d9d9] pb-[5px]">
              {SIDE_TABS.map((t) => (
                <div
                  key={t.label}
                  className={`flex shrink-0 flex-col-reverse items-center justify-start gap-[6px] pb-[10px] ${t.active ? 'mr-[-1px] border-l-2 border-[#2f75b5] bg-white' : 'border-b border-[#e2e2e2]'}`}
                  style={{ height: t.h }}
                >
                  {t.icon}
                  <span className={`rotate-180 whitespace-nowrap leading-[14px] [writing-mode:vertical-rl] ${t.text}`}>{t.label}</span>
                </div>
              ))}
            </div>
            <div className="flex min-w-0 flex-1 flex-col pl-[9px]">
              <div className="flex h-[22px] shrink-0 items-center">
                {TOOLS.map((t, i) => (
                  <span key={i} className={`flex h-[20px] items-center justify-center ${t.sep ? 'border-r border-[#dedede]' : ''}`} style={{ width: t.w }}>
                    {t.icon}
                  </span>
                ))}
              </div>
              <div className="mr-[2px] flex h-[21px] shrink-0 items-center justify-end gap-[5px] border border-[#a8a8a8] pr-[2px]">
                <svg width="15" height="14" viewBox="0 0 15 14">
                  <path d="M0 0h15L9.500 6.500V14L6 11V6.500z" fill="#2f75b5" />
                </svg>
                <svg width="9" height="14" viewBox="0 0 9 14" fill="none" stroke="#777" strokeWidth="1.500">
                  <path d="M1 1l6 6-6 6" />
                </svg>
              </div>
              <div className="mt-[1px] flex min-h-0 flex-1 flex-col">
                <div className="flex min-h-0 flex-1 border-l border-t-2 border-r-2 border-[#a8a8a8]">
                  <div className="w-[244px] shrink-0 overflow-hidden">
                    <div className="flex h-[26px] border-b border-[#a8a8a8]">
                      <div className="flex w-[12px] items-center justify-center border-r border-[#a8a8a8]">
                        <span className="h-[6px] w-[6px] rounded-full bg-[#f0a030]" />
                      </div>
                      <div className="flex w-[160px] items-center justify-between border-r border-[#a8a8a8] pl-[6px] pr-[9px] text-[12px]">
                        Katmanlar
                        <svg width="8" height="8" viewBox="0 0 8 8" stroke="#777">
                          <path d="M0 1.500h3M0 4.500h5M0 7.500h8" />
                        </svg>
                      </div>
                      <div className="flex w-[18px] items-center justify-center border-r border-[#a8a8a8]">
                        <svg width="12" height="12" viewBox="0 0 12 12">
                          <rect width="6" height="6" fill="#4b9b7b" />
                          <rect x="6" width="6" height="6" fill="#e6b45a" />
                          <rect y="6" width="6" height="6" fill="#c8402b" />
                          <rect x="6" y="6" width="6" height="6" fill="#5f90c3" />
                        </svg>
                      </div>
                      <div className="flex w-[16px] items-center justify-center border-r border-[#a8a8a8]">
                        <Toggle on />
                      </div>
                      <div className="flex w-[16px] items-center justify-center border-r border-[#a8a8a8]">
                        <Lock />
                      </div>
                      <div className="flex w-[15px] items-center justify-center border-r border-[#a8a8a8]">
                        <Pattern fill />
                      </div>
                      <div className="flex w-[7px] items-center overflow-hidden pl-[2px]">
                        <Plug />
                      </div>
                    </div>
                    {LAYERS.map((l, i) => (
                      <LayerRow key={l.name} layer={l} index={i} />
                    ))}
                  </div>
                  <div className="flex w-[16px] shrink-0 flex-col bg-[#f0f0f0]">
                    <div className="flex h-[18px] items-center justify-center border border-[#d0d0d0] bg-white">
                      <svg width="8" height="5" viewBox="0 0 8 5">
                        <path d="M4 0l4 5H0z" fill="#888" />
                      </svg>
                    </div>
                    <div className="h-[493px] border-b border-[#c8c8c8] bg-white" />
                    <div className="mt-auto flex h-[16px] items-center justify-center border border-[#d0d0d0] bg-white">
                      <svg width="8" height="5" viewBox="0 0 8 5">
                        <path d="M4 5L8 0H0z" fill="#888" />
                      </svg>
                    </div>
                  </div>
                </div>
                <div className="flex h-[18px] shrink-0 border-x border-b-2 border-[#a8a8a8] bg-[#f0f0f0]">
                  <div className="flex w-[17px] items-center justify-center border-r border-[#c8c8c8] bg-white">
                    <svg width="5" height="8" viewBox="0 0 5 8">
                      <path d="M0 4l5-4v8z" fill="#888" />
                    </svg>
                  </div>
                  <div className="w-[131px] border-r border-[#b8b8b8] bg-white" />
                  <div className="flex-1" />
                  <div className="flex w-[17px] items-center justify-center border-x border-[#c8c8c8] bg-white">
                    <svg width="5" height="8" viewBox="0 0 5 8">
                      <path d="M5 4L0 0v8z" fill="#888" />
                    </svg>
                  </div>
                  <div className="w-[17px] bg-white" />
                </div>
              </div>
              <div className="flex h-[19px] shrink-0 items-center border-t-2 border-[#2f75b5] pl-[4px] text-[11.500px]">
                <span className="w-[74px]">Nesne Sayısı</span>
                <span>8</span>
              </div>
            </div>
          </div>
        </div>
        <Drawing />
      </div>

      {/* status bar */}
      <div className="flex h-[28px] shrink-0 items-center border-t border-b border-t-[#2f75b5] border-b-black">
        <span className="ml-[2px] h-[14px] w-[14px] bg-[#008000]" />
        <span className="ml-[4px] w-[118px] font-bold">3B_ORTAK_ALAN</span>
        <span className="w-[38px]">Ölçek:</span>
        <div className="flex h-[22px] w-[80px] items-center justify-between border border-[#aaaaaa] pl-[3px] pr-[6px]">
          1
          <svg width="7" height="4" viewBox="0 0 7 4">
            <path d="M0 0h7L3.500 4z" fill="#888" />
          </svg>
        </div>
        <svg width="14" height="16" viewBox="0 0 14 16" className="ml-[9px]">
          <circle cx="7" cy="9" r="6.500" fill="#5f9fd8" />
          <path d="M1 7a6 6 0 0 1 12 0z" fill="#e0505a" />
          <path d="M4 3h6l-3-3z" fill="#e0505a" />
        </svg>
        <span className="ml-[3px] w-[137px]">Tanımsız</span>
        <svg width="16" height="16" viewBox="0 0 16 16" className="ml-[3px]" fill="none">
          <circle cx="7" cy="8" r="6.500" fill="#fff" stroke="#2f75b5" />
          <path d="M.5 8h13M7 1.500v13M3 3c2 2 6 2 8 0M3 13c2-2 6-2 8 0" stroke="#2f75b5" />
          <circle cx="12.500" cy="4" r="3" fill="#d0432b" />
        </svg>
        <span className="ml-[1px]">Y: -43.764, X: 22.742</span>
      </div>
    </div>
  );
}
